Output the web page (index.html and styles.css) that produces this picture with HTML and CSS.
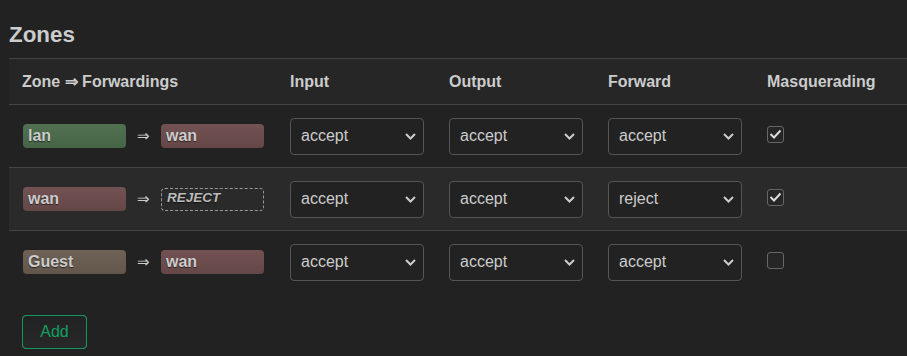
FILE: index.html
```html
<!DOCTYPE html>
<html lang="en">
<head>
    <meta charset="UTF-8">
    <title>Firewall - Zones</title>
    <link rel="stylesheet" href="styles.css">
</head>
<body>
    <h2 class="section-title">Zones</h2>

    <table class="zone-table">
        <colgroup>
            <col class="col-zone">
            <col class="col-policy">
            <col class="col-policy">
            <col class="col-policy">
            <col>
        </colgroup>
        <thead>
            <tr>
                <th>Zone &rArr; Forwardings</th>
                <th>Input</th>
                <th>Output</th>
                <th>Forward</th>
                <th>Masquerading</th>
            </tr>
        </thead>
        <tbody>
            <tr>
                <td>
                    <div class="fwd">
                        <span class="zonebadge zone-lan">lan</span>
                        <span class="arrow">&rArr;</span>
                        <span class="zonebadge zone-wan">wan</span>
                    </div>
                </td>
                <td><div class="select"><span>accept</span><svg width="11" height="7" viewBox="0 0 11 7"><path d="M1 1l4.5 4.5L10 1" fill="none" stroke="#ccc" stroke-width="2"/></svg></div></td>
                <td><div class="select"><span>accept</span><svg width="11" height="7" viewBox="0 0 11 7"><path d="M1 1l4.5 4.5L10 1" fill="none" stroke="#ccc" stroke-width="2"/></svg></div></td>
                <td><div class="select"><span>accept</span><svg width="11" height="7" viewBox="0 0 11 7"><path d="M1 1l4.5 4.5L10 1" fill="none" stroke="#ccc" stroke-width="2"/></svg></div></td>
                <td><div class="checkbox"><svg width="13" height="10" viewBox="0 0 13 10"><path d="M1.5 5l3.5 3.5L11.5 1.5" fill="none" stroke="#ddd" stroke-width="2"/></svg></div></td>
            </tr>
            <tr class="alt">
                <td>
                    <div class="fwd">
                        <span class="zonebadge zone-wan">wan</span>
                        <span class="arrow">&rArr;</span>
                        <span class="zonebadge zone-reject">REJECT</span>
                    </div>
                </td>
                <td><div class="select"><span>accept</span><svg width="11" height="7" viewBox="0 0 11 7"><path d="M1 1l4.5 4.5L10 1" fill="none" stroke="#ccc" stroke-width="2"/></svg></div></td>
                <td><div class="select"><span>accept</span><svg width="11" height="7" viewBox="0 0 11 7"><path d="M1 1l4.5 4.5L10 1" fill="none" stroke="#ccc" stroke-width="2"/></svg></div></td>
                <td><div class="select"><span>reject</span><svg width="11" height="7" viewBox="0 0 11 7"><path d="M1 1l4.5 4.5L10 1" fill="none" stroke="#ccc" stroke-width="2"/></svg></div></td>
                <td><div class="checkbox"><svg width="13" height="10" viewBox="0 0 13 10"><path d="M1.5 5l3.5 3.5L11.5 1.5" fill="none" stroke="#ddd" stroke-width="2"/></svg></div></td>
            </tr>
            <tr>
                <td>
                    <div class="fwd">
                        <span class="zonebadge zone-guest">Guest</span>
                        <span class="arrow">&rArr;</span>
                        <span class="zonebadge zone-wan">wan</span>
                    </div>
                </td>
                <td><div class="select"><span>accept</span><svg width="11" height="7" viewBox="0 0 11 7"><path d="M1 1l4.5 4.5L10 1" fill="none" stroke="#ccc" stroke-width="2"/></svg></div></td>
                <td><div class="select"><span>accept</span><svg width="11" height="7" viewBox="0 0 11 7"><path d="M1 1l4.5 4.5L10 1" fill="none" stroke="#ccc" stroke-width="2"/></svg></div></td>
                <td><div class="select"><span>accept</span><svg width="11" height="7" viewBox="0 0 11 7"><path d="M1 1l4.5 4.5L10 1" fill="none" stroke="#ccc" stroke-width="2"/></svg></div></td>
                <td><div class="checkbox"></div></td>
            </tr>
        </tbody>
    </table>

    <div class="actions">
        <button class="btn-add">Add</button>
    </div>
</body>
</html>
```

FILE: styles.css
```css
body {
    font-family: "Liberation Sans", Arial, sans-serif;
    font-size: 16px;
    color: #ccc;
    background-color: #222;
    margin: 0;
    padding: 0 0 0 9px;
}
.section-title {
    font-size: 22.4px;
    font-weight: bold;
    line-height: 26px;
    margin: 0;
    padding: 22px 0 10px 0;
}
.zone-table {
    width: 100%;
    border-collapse: collapse;
    table-layout: fixed;
}
.col-zone {
    width: 268px;
}
.col-policy {
    width: 159px;
}
.zone-table th {
    text-align: left;
    font-weight: bold;
    height: 45px;
    padding: 0 13px;
    background-color: #262626;
    border-top: 1px solid #444;
    border-bottom: 1px solid #444;
}
.zone-table td {
    height: 62px;
    padding: 0 13px;
    border-bottom: 1px solid #444;
    vertical-align: middle;
}
.zone-table tbody tr:last-child td {
    border-bottom: none;
}
.zone-table tr.alt td {
    background-color: #2a2a2a;
}
.fwd {
    display: flex;
    align-items: center;
    padding-left: 1px;
}
.zonebadge {
    box-sizing: border-box;
    width: 103px;
    height: 24px;
    line-height: 24px;
    padding: 0 5px;
    border-radius: 4px;
    font-weight: bold;
    color: #ccc;
    text-shadow: 0 1px 1px rgba(0, 0, 0, 0.6);
    background-image: linear-gradient(rgba(255, 255, 255, 0.04), rgba(0, 0, 0, 0.06));
}
.zone-lan {
    background-color: #4a6b4a;
}
.zone-wan {
    background-color: #6c4b4b;
}
.zone-guest {
    background-color: #695b4f;
}
.zone-reject {
    background: none;
    border: 1px dashed #999;
    height: 23px;
    line-height: 18px;
    font-size: 13.5px;
    font-style: italic;
    color: #bbb;
}
.arrow {
    width: 35px;
    text-align: center;
    font-size: 15px;
}
.select {
    box-sizing: border-box;
    display: flex;
    align-items: center;
    justify-content: space-between;
    width: 134px;
    height: 37px;
    padding: 0 7px 0 10px;
    border: 1px solid #555;
    border-radius: 4px;
    background-color: #222;
    color: #ccc;
}
.checkbox {
    box-sizing: border-box;
    display: flex;
    align-items: center;
    justify-content: center;
    width: 17px;
    height: 17px;
    margin-top: -4px;
    border: 1px solid #666;
    border-radius: 3px;
    background-color: #262626;
}
.actions {
    padding: 22px 13px;
}
.btn-add {
    font-family: "Liberation Sans", Arial, sans-serif;
    font-size: 16px;
    color: #10a060;
    width: 65px;
    height: 34px;
    border: 1px solid #0f9a5c;
    border-radius: 4px;
    background-image: linear-gradient(#222, #282828);
    cursor: pointer;
}
```
